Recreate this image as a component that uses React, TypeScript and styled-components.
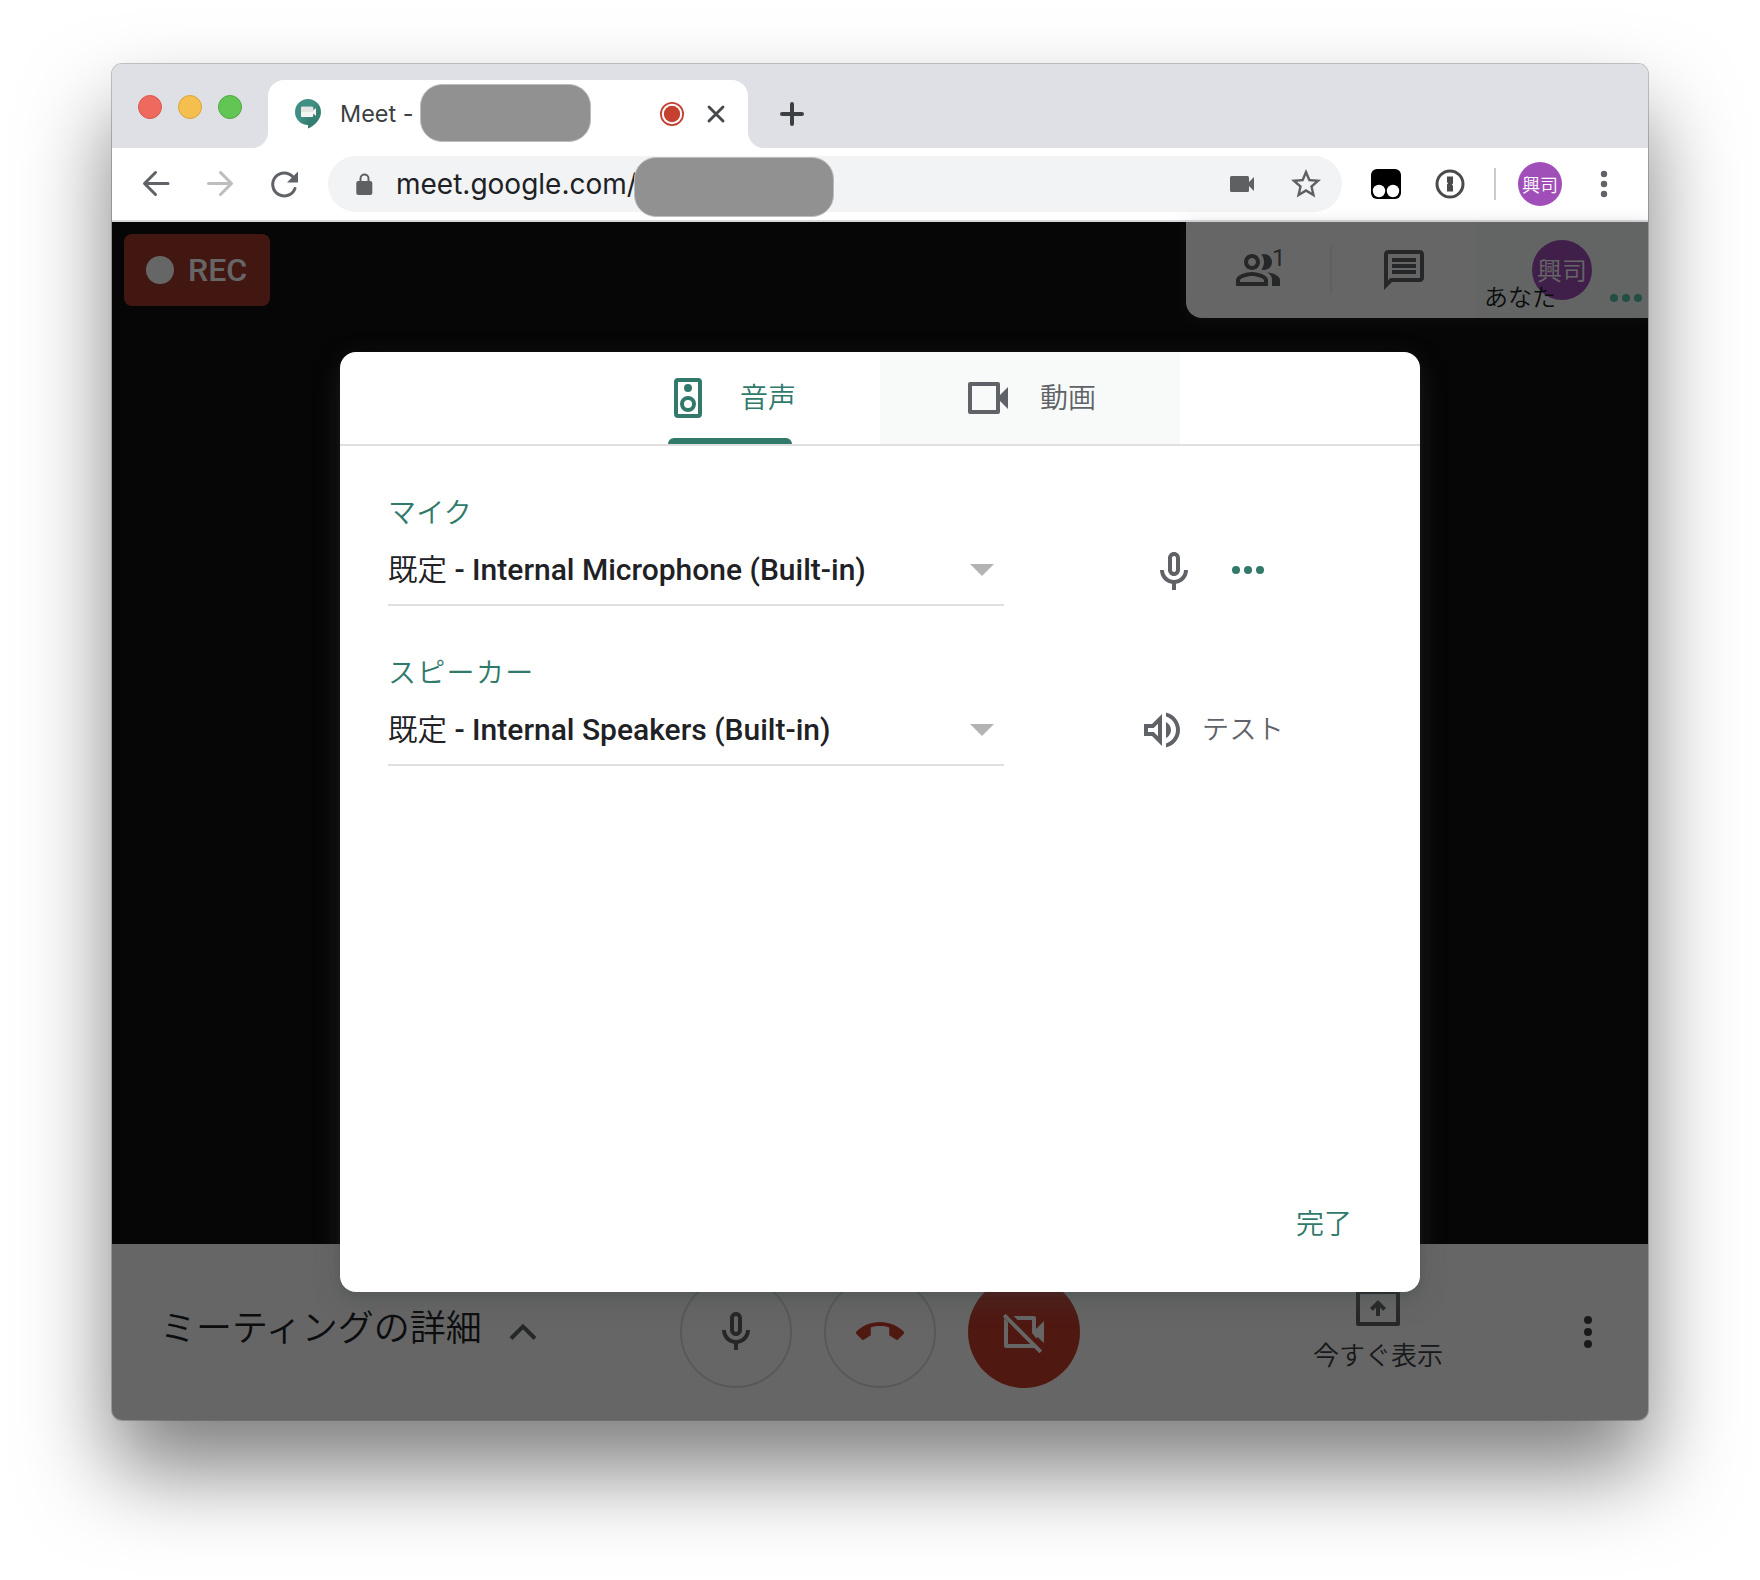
import React from "react";
import styled, { createGlobalStyle } from "styled-components";

const GlobalStyle = createGlobalStyle`
  *, *::before, *::after { box-sizing: border-box; }
  body { margin: 0; background: #fff; }
`;

const jp = `Roboto, "Noto Sans CJK JP", sans-serif`;
const ui = `Inter, "Noto Sans CJK JP", sans-serif`;

const Desktop = styled.div`
  width: 1760px;
  height: 1580px;
  padding: 64px 112px;
  background: #fff;
  overflow: hidden;
  font-family: ${jp};
`;

const Window = styled.div`
  width: 1536px;
  height: 1356px;
  display: flex;
  flex-direction: column;
  border-radius: 10px;
  overflow: hidden;
  box-shadow: 0 0 0 1px rgba(0, 0, 0, 0.22), 0 50px 88px rgba(0, 0, 0, 0.51);
`;

const TabStrip = styled.div`
  height: 84px;
  flex: none;
  display: flex;
  align-items: flex-end;
  background: #dfe0e6;
`;

const Lights = styled.div`
  width: 156px;
  height: 84px;
  display: flex;
  gap: 16px;
  padding: 31px 0 0 26px;
`;

const Light = styled.span<{ $fill: string; $edge: string }>`
  width: 24px;
  height: 24px;
  border-radius: 50%;
  background: ${(p) => p.$fill};
  border: 1px solid ${(p) => p.$edge};
`;

const Tab = styled.div`
  position: relative;
  width: 480px;
  height: 68px;
  display: flex;
  align-items: center;
  padding-left: 26px;
  background: #fff;
  border-radius: 16px 16px 0 0;
  &::before,
  &::after {
    content: "";
    position: absolute;
    bottom: 0;
    width: 16px;
    height: 16px;
  }
  &::before {
    left: -16px;
    background: radial-gradient(circle at 0 0, transparent 15.5px, #fff 16.5px);
  }
  &::after {
    right: -16px;
    background: radial-gradient(circle at 100% 0, transparent 15.5px, #fff 16.5px);
  }
`;

const TabTitle = styled.span`
  width: 80px;
  margin-left: 18px;
  font: 400 23.4px/28px ${ui};
  color: #3c4043;
  white-space: nowrap;
`;

const Redaction = styled.span<{ $w: number; $h: number; $shift?: number }>`
  flex: none;
  width: ${(p) => p.$w}px;
  height: ${(p) => p.$h}px;
  margin-top: ${(p) => p.$shift ?? 0}px;
  border-radius: 22px;
  background: #919191;
  border: 1px solid #bdbdbd;
`;

const TabIcons = styled.div`
  display: flex;
  align-items: center;
  gap: 12px;
  margin-left: 69px;
`;

const NewTab = styled.div`
  height: 68px;
  display: flex;
  align-items: center;
  margin-left: 32px;
`;

const Toolbar = styled.div`
  height: 74px;
  flex: none;
  display: flex;
  align-items: center;
  background: #fff;
  border-bottom: 2px solid #d8d9dc;
`;

const NavButtons = styled.div`
  width: 216px;
  display: flex;
  gap: 32px;
  padding-left: 28px;
`;

const Omnibox = styled.div`
  width: 1014px;
  height: 56px;
  display: flex;
  align-items: center;
  padding-left: 28px;
  border-radius: 28px;
  background: #f1f3f4;
`;

const Url = styled.span`
  width: 238px;
  margin-left: 23px;
  font: 400 28px/40px ${ui};
  color: #202124;
  white-space: nowrap;
`;

const OmniIcons = styled.div`
  display: flex;
  align-items: center;
  gap: 34px;
  margin: 0 18px 0 auto;
`;

const Extensions = styled.div`
  display: flex;
  align-items: center;
  padding-left: 29px;
`;

const OnePassword = styled.svg`
  margin-left: 34px;
`;

const Separator = styled.span`
  width: 2px;
  height: 32px;
  margin: 0 22px 0 29px;
  background: #ccc;
`;

const Avatar = styled.span<{ $size: number; $font: number }>`
  flex: none;
  width: ${(p) => p.$size}px;
  height: ${(p) => p.$size}px;
  display: flex;
  align-items: center;
  justify-content: center;
  padding-bottom: 1px;
  border-radius: 50%;
  background: #a04eb8;
  color: #fff;
  font: 350 ${(p) => p.$font}px/1 "Noto Sans CJK JP", sans-serif;
  white-space: nowrap;
`;

const MenuDots = styled.div`
  margin-left: 36px;
  display: flex;
`;

const Page = styled.div`
  position: relative;
  flex: 1;
  display: flex;
  flex-direction: column;
  background: #101010;
`;

const Stage = styled.div`
  flex: 1;
  display: flex;
  justify-content: space-between;
  align-items: flex-start;
  padding-left: 12px;
`;

const RecBadge = styled.div`
  width: 146px;
  height: 72px;
  margin-top: 12px;
  display: flex;
  align-items: center;
  gap: 14px;
  padding-left: 22px;
  border-radius: 8px;
  background: #a5392b;
  color: #fff;
  font: 500 32px/74px Roboto, sans-serif;
  &::before {
    content: "";
    width: 28px;
    height: 28px;
    border-radius: 50%;
    background: #fff;
  }
`;

const InfoPanel = styled.div`
  width: 462px;
  height: 96px;
  display: flex;
  align-items: center;
  background: #fff;
  border-radius: 0 0 0 16px;
  overflow: hidden;
  box-shadow: 0 2px 16px rgba(90, 95, 92, 0.25);
`;

const PanelButton = styled.div<{ $w: number; $divider?: boolean }>`
  width: ${(p) => p.$w}px;
  height: 48px;
  display: flex;
  justify-content: center;
  border-right: ${(p) => (p.$divider ? "2px solid #efefef" : "0")};
`;

const IconWithCount = styled.div`
  position: relative;
  width: 48px;
  height: 48px;
`;

const Count = styled.span`
  position: absolute;
  left: 38px;
  top: -2px;
  font: 400 24px/28px Roboto, sans-serif;
  color: #5f6368;
`;

const SelfTile = styled.div`
  position: relative;
  width: 172px;
  height: 96px;
  padding: 18px 0 0 56px;
  background: #f7fdf9;
`;

const SelfName = styled.span`
  position: absolute;
  left: 8px;
  top: 58px;
  font: 350 24px/36px ${jp};
  color: #202124;
`;

const Dots = styled.span<{ $vertical?: boolean; $color: string }>`
  display: flex;
  flex-direction: ${(p) => (p.$vertical ? "column" : "row")};
  gap: 4px;
  i {
    width: 8px;
    height: 8px;
    border-radius: 50%;
    background: ${(p) => p.$color};
  }
`;

const TileDots = styled.div`
  position: absolute;
  left: 134px;
  top: 72px;
`;

const BottomBar = styled.div`
  height: 176px;
  flex: none;
  display: grid;
  grid-template-columns: 568px 400px 1fr;
  align-items: center;
  background: #fff;
`;

const Details = styled.div`
  display: flex;
  align-items: center;
  padding-left: 48px;
  gap: 24px;
  font: 350 36px/48px ${jp};
  color: #202124;
  white-space: nowrap;
`;

const DetailsText = styled.span`
  margin-top: -6px;
  width: 325px;
`;

const CallButtons = styled.div`
  display: flex;
  gap: 32px;
`;

const CallButton = styled.div<{ $off?: boolean }>`
  width: 112px;
  height: 112px;
  display: flex;
  align-items: center;
  justify-content: center;
  border-radius: 50%;
  border: ${(p) => (p.$off ? "0" : "2px solid #dadce0")};
  background: ${(p) => (p.$off ? "#c5402f" : "#fff")};
`;

const RightTools = styled.div`
  display: flex;
  align-items: center;
  padding-left: 148px;
`;

const Present = styled.div`
  width: 300px;
  display: flex;
  flex-direction: column;
  align-items: center;
  gap: 6px;
  margin: 0 56px 6px 0;
  font: 350 26px/36px ${jp};
  color: #3c4043;
`;

const Scrim = styled.div`
  position: absolute;
  inset: 0;
  display: flex;
  align-items: flex-start;
  justify-content: center;
  padding-top: 130px;
  background: rgba(0, 0, 0, 0.6);
`;

const Dialog = styled.div`
  width: 1080px;
  height: 940px;
  display: flex;
  flex-direction: column;
  background: #fff;
  border-radius: 16px;
  overflow: hidden;
  box-shadow: 0 2px 6px rgba(60, 68, 64, 0.15), 0 8px 28px rgba(60, 68, 64, 0.32);
`;

const DialogTabs = styled.div`
  height: 94px;
  flex: none;
  display: flex;
  justify-content: center;
  border-bottom: 2px solid #e0e0e0;
`;

const DialogTab = styled.div<{ $active?: boolean }>`
  position: relative;
  width: 300px;
  height: 92px;
  display: flex;
  gap: 28px;
  padding: 22px 0 0 84px;
  background: ${(p) => (p.$active ? "#fff" : "#f8faf9")};
  color: ${(p) => (p.$active ? "#31796b" : "#5f6368")};
  font: 350 28px/50px ${jp};
  &::after {
    content: "";
    display: ${(p) => (p.$active ? "block" : "none")};
    position: absolute;
    left: 88px;
    bottom: 0;
    width: 124px;
    height: 6px;
    border-radius: 6px 6px 0 0;
    background: #31796b;
  }
`;

const Settings = styled.div`
  flex: 1;
  display: flex;
  flex-direction: column;
  gap: 24px;
  padding: 44px 48px 0;
`;

const Row = styled.div`
  height: 136px;
  display: flex;
`;

const Field = styled.div`
  width: 616px;
  height: 116px;
`;

const Label = styled.div<{ $tracking: number }>`
  height: 44px;
  font: 350 28px/48px ${jp};
  letter-spacing: ${(p) => p.$tracking}px;
  color: #31796b;
`;

const Select = styled.div`
  height: 72px;
  display: flex;
  align-items: center;
  justify-content: space-between;
  padding: 2px 10px 0 0;
  border-bottom: 2px solid #e0e0e0;
  font: 500 30px/68px Roboto, "Noto Sans CJK JP", sans-serif;
  color: #202124;
  white-space: nowrap;
  small {
    font-size: 29.5px;
    font-weight: 350;
  }
`;

const Caret = styled.span`
  border: 12px solid transparent;
  border-top-color: #b3b3b3;
  border-bottom: 0;
`;

const RowTools = styled.div<{ $left: number; $gap: number }>`
  height: 48px;
  display: flex;
  align-items: center;
  gap: ${(p) => p.$gap}px;
  margin: 56px 0 0 ${(p) => p.$left}px;
  color: #5f6368;
  font: 350 27px/50px ${jp};
  letter-spacing: 0.4px;
`;

const MicSlot = styled.span`
  display: flex;
  margin-top: 4px;
`;

const Done = styled.div`
  display: flex;
  justify-content: flex-end;
  padding: 0 68px 46px 0;
  font: 350 28px/42px ${jp};
  color: #31796b;
`;

const MIC =
  "M12 14c1.66 0 3-1.34 3-3V5c0-1.66-1.34-3-3-3S9 3.34 9 5v6c0 1.66 1.34 3 3 3zm-1-9c0-.55.45-1 1-1s1 .45 1 1v6c0 .55-.45 1-1 1s-1-.45-1-1V5zm6 6c0 2.76-2.24 5-5 5s-5-2.24-5-5H5c0 3.53 2.61 6.43 6 6.92V21h2v-3.08c3.39-.49 6-3.39 6-6.92h-2z";
const VOLUME =
  "M3 9v6h4l5 5V4L7 9H3zm7-.17v6.34L7.83 13H5v-2h2.83L10 8.83zM16.5 12c0-1.77-1.02-3.29-2.5-4.03v8.05c1.48-.73 2.5-2.25 2.5-4.02zM14 3.23v2.06c2.89.86 5 3.54 5 6.71s-2.11 5.85-5 6.71v2.06c4.01-.91 7-4.49 7-8.77s-2.99-7.86-7-8.77z";
const PEOPLE =
  "M16.67 13.13C18.04 14.06 19 15.32 19 17v3h4v-3c0-2.18-3.57-3.47-6.33-3.87zM15 12c2.21 0 4-1.79 4-4s-1.79-4-4-4c-.47 0-.91.1-1.33.24C14.5 5.27 15 6.58 15 8s-.5 2.73-1.33 3.76c.42.14.86.24 1.33.24zM9 12c2.21 0 4-1.79 4-4s-1.79-4-4-4-4 1.79-4 4 1.79 4 4 4zm0-6c1.1 0 2 .9 2 2s-.9 2-2 2-2-.9-2-2 .9-2 2-2zM9 13c-2.67 0-8 1.34-8 4v3h16v-3c0-2.66-5.33-4-8-4zm6 5H3v-.99C3.2 16.29 6.3 15 9 15s5.8 1.29 6 2v1z";
const CHAT =
  "M4 4h16v12H5.17L4 17.17V4m0-2c-1.1 0-1.99.9-1.99 2L2 22l4-4h14c1.1 0 2-.9 2-2V4c0-1.1-.9-2-2-2H4zm2 10h12v2H6v-2zm0-3h12v2H6V9zm0-3h12v2H6V6z";
const SPEAKER =
  "M17 2H7a2 2 0 0 0-2 2v16a2 2 0 0 0 2 1.99L17 22a2 2 0 0 0 2-2V4a2 2 0 0 0-2-2zm0 18H7V4h10v16zm-5-11a2 2 0 1 0 0-4 2 2 0 0 0 0 4zm0 10a4 4 0 1 0 0-8 4 4 0 0 0 0 8zm0-6a2 2 0 1 1 0 4 2 2 0 0 1 0-4z";
const VIDEO =
  "M18 10.5V5a1 1 0 0 0-1-1H3a1 1 0 0 0-1 1v14a1 1 0 0 0 1 1h14a1 1 0 0 0 1-1v-5.5l4 4v-11l-4 4zM16 18H4V6h12v12z";
const HANGUP =
  "M12 9c-1.6 0-3.15.25-4.6.72v3.9L4.1 15.8c-.3.25-.8.2-1.1-.1L.29 13.08c-.38-.38-.38-1.03 0-1.41C3.34 8.78 7.46 7 12 7s8.66 1.78 11.71 4.67c.38.38.38 1.03 0 1.41L21 15.7c-.3.3-.8.35-1.1.1l-3.3-2.18v-3.9C15.15 9.25 13.6 9 12 9z";
const PRESENT =
  "M22 3H2a1 1 0 0 0-1 1v16a1 1 0 0 0 1 1h20a1 1 0 0 0 1-1V4a1 1 0 0 0-1-1zm-1 16H3V5h18v14zM12 8l4 4-1.4 1.4L13 11.8V16h-2v-4.2l-1.6 1.6L8 12z";
const STAR =
  "M22 9.24l-7.19-.62L12 2 9.19 8.63 2 9.24l5.46 4.73L5.82 21 12 17.27 18.18 21l-1.63-7.03L22 9.24zM12 15.4l-3.76 2.27 1-4.28-3.32-2.88 4.38-.38L12 6.1l1.71 4.04 4.38.38-3.32 2.88 1 4.28L12 15.4z";

const Icon = ({ d, color = "#5f6368", size = 48 }: { d: string; color?: string; size?: number }) => (
  <svg width={size} height={size} viewBox="0 0 24 24" fill={color} fillRule="evenodd">
    <path d={d} />
  </svg>
);

const DotRow = ({ color, vertical }: { color: string; vertical?: boolean }) => (
  <Dots $color={color} $vertical={vertical}>
    <i />
    <i />
    <i />
  </Dots>
);

const MeetLogo = () => (
  <svg width="28" height="32" viewBox="0 0 28 32">
    <defs>
      <linearGradient id="bubble" x1="0" y1="0" x2="1" y2="1">
        <stop offset="0.45" stopColor="#408f83" />
        <stop offset="0.65" stopColor="#357f72" />
      </linearGradient>
    </defs>
    <path d="M14 1a13 13 0 1 0 0 26v3.600c6-2.800 13-8.600 13-16.600A13 13 0 0 0 14 1z" fill="url(#bubble)" />
    <path d="M8 8.700h10a1.200 1.200 0 0 1 1.200 1.200v2.600L22 10v8l-2.800-2.400v2.200a1.200 1.200 0 0 1-1.200 1.200H8a1 1 0 0 1-1-1V9.700a1 1 0 0 1 1-1z" fill="#f4f4f4" />
    <path d="M8 8.700h10a1.200 1.200 0 0 1 1.200 1.200V14H7V9.700a1 1 0 0 1 1-1z" fill="#e3e5e4" />
  </svg>
);

export default function App() {
  return (
    <>
      <GlobalStyle />
      <Desktop>
        <Window>
          <TabStrip>
            <Lights>
              <Light $fill="#ee6a5f" $edge="#d9574c" />
              <Light $fill="#f5bf4f" $edge="#dba23c" />
              <Light $fill="#62c655" $edge="#50a73e" />
            </Lights>
            <Tab>
              <MeetLogo />
              <TabTitle>Meet -</TabTitle>
              <Redaction $w={171} $h={58} $shift={-3} />
              <TabIcons>
                <svg width="24" height="24" viewBox="0 0 24 24">
                  <circle cx="12" cy="12" r="11.100" fill="none" stroke="#c5402f" strokeWidth="1.800" />
                  <circle cx="12" cy="12" r="8.200" fill="#c5402f" />
                </svg>
                <svg width="40" height="24" viewBox="0 0 40 24" stroke="#45494c" strokeWidth="2.900" strokeLinecap="round">
                  <path d="M13 5l14 14M27 5L13 19" />
                </svg>
              </TabIcons>
            </Tab>
            <NewTab>
              <svg width="24" height="24" viewBox="0 0 24 24" stroke="#3c4043" strokeWidth="4" strokeLinecap="round">
                <path d="M12 2v20M2 12h20" />
              </svg>
            </NewTab>
          </TabStrip>

          <Toolbar>
            <NavButtons>
              <svg width="32" height="32" viewBox="0 0 32 32" fill="none" stroke="#5f6368" strokeWidth="3" strokeLinecap="round" strokeLinejoin="round">
                <path d="M28 15.500H5M15.500 4.500l-11 11 11 11" />
              </svg>
              <svg width="32" height="32" viewBox="0 0 32 32" fill="none" stroke="#bcbdbf" strokeWidth="3" strokeLinecap="round" strokeLinejoin="round">
                <path d="M4.500 15.500H27.500M16.500 4.500l11 11-11 11" />
              </svg>
              <svg width="32" height="32" viewBox="0 0 32 32" fill="none" stroke="#5f6368" strokeWidth="3" strokeLinecap="round">
                <path d="M27 20.500a11.500 11.500 0 1 1-2-11.500" />
                <path d="M30 3.500v11H19z" fill="#5f6368" stroke="none" />
              </svg>
            </NavButtons>
            <Omnibox>
              <svg width="17" height="24" viewBox="0 0 17 24">
                <path d="M4.500 10V6.500a4 4 0 0 1 8 0V10" fill="none" stroke="#5f6062" strokeWidth="2" />
                <rect x="0.300" y="9" width="16" height="14" rx="2" fill="#5f6062" />
              </svg>
              <Url>meet.google.com/</Url>
              <Redaction $w={200} $h={60} $shift={6} />
              <OmniIcons>
                <svg width="24" height="16" viewBox="0 0 24 16" fill="#5f6062">
                  <path d="M1.500 0h16A1.500 1.500 0 0 1 19 1.500V6l5-5v14l-5-5v4.500a1.500 1.500 0 0 1-1.500 1.500h-16A1.500 1.500 0 0 1 0 14.500v-13A1.500 1.500 0 0 1 1.500 0z" />
                </svg>
                <Icon size={36} color="#5f6062" d={STAR} />
              </OmniIcons>
            </Omnibox>
            <Extensions>
              <svg width="30" height="30" viewBox="0 0 30 30">
                <rect width="30" height="30" rx="6" />
                <circle cx="8" cy="22" r="6.200" fill="#fff" />
                <circle cx="22" cy="22" r="6.200" fill="#fff" />
              </svg>
              <OnePassword width="30" height="30" viewBox="0 0 30 30">
                <circle cx="15" cy="15" r="13" fill="none" stroke="#4a4a4a" strokeWidth="3" />
                <path d="M12 7.500h6v7l-1 1 1 1.500v5.500h-6v-7l1-1-1-1.500z" fill="#4a4a4a" />
              </OnePassword>
              <Separator />
              <Avatar $size={44} $font={18}>興司</Avatar>
              <MenuDots>
                <svg width="12" height="28" viewBox="0 0 12 28" fill="#5f6368">
                  <circle cx="6" cy="4" r="3.200" />
                  <circle cx="6" cy="14" r="3.200" />
                  <circle cx="6" cy="24" r="3.200" />
                </svg>
              </MenuDots>
            </Extensions>
          </Toolbar>

          <Page>
            <Stage>
              <RecBadge>REC</RecBadge>
              <InfoPanel>
                <PanelButton $w={146} $divider>
                  <IconWithCount>
                    <Icon d={PEOPLE} />
                    <Count>1</Count>
                  </IconWithCount>
                </PanelButton>
                <PanelButton $w={144}>
                  <Icon d={CHAT} />
                </PanelButton>
                <SelfTile>
                  <Avatar $size={60} $font={25}>興司</Avatar>
                  <SelfName>あなた</SelfName>
                  <TileDots>
                    <DotRow color="#5ac4a8" />
                  </TileDots>
                </SelfTile>
              </InfoPanel>
            </Stage>
            <BottomBar>
              <Details>
                <DetailsText>ミーティングの詳細</DetailsText>
                <svg width="28" height="20" viewBox="0 0 28 20" fill="none" stroke="#5f6368" strokeWidth="4">
                  <path d="M2 16.500L14 4.500l12 12" />
                </svg>
              </Details>
              <CallButtons>
                <CallButton>
                  <Icon d={MIC} />
                </CallButton>
                <CallButton>
                  <Icon d={HANGUP} color="#c5402f" />
                </CallButton>
                <CallButton $off>
                  <svg width="48" height="48" viewBox="0 0 24 24" fill="#fff">
                    <path d="M6.800 4H17a1 1 0 0 1 1 1v5.500l4-4v11l-3.300-3-.5.700L16 12.500V6H8.800z" />
                    <path d="M2 5v14a1 1 0 0 0 1 1h14.500l-1-2H4V7z" />
                    <path d="M2.100 3.600L20.400 21.900" stroke="#fff" strokeWidth="1.900" />
                  </svg>
                </CallButton>
              </CallButtons>
              <RightTools>
                <Present>
                  <Icon d={PRESENT} />
                  今すぐ表示
                </Present>
                <DotRow color="#3c4043" vertical />
              </RightTools>
            </BottomBar>

            <Scrim>
              <Dialog>
                <DialogTabs>
                  <DialogTab $active>
                    <Icon d={SPEAKER} color="#31796b" />
                    音声
                  </DialogTab>
                  <DialogTab>
                    <Icon d={VIDEO} />
                    動画
                  </DialogTab>
                </DialogTabs>
                <Settings>
                  <Row>
                    <Field>
                      <Label $tracking={0.2}>マイク</Label>
                      <Select>
                        <span>
                          <small>既定</small> - Internal Microphone (Built-in)
                        </span>
                        <Caret />
                      </Select>
                    </Field>
                    <RowTools $left={146} $gap={34}>
                      <MicSlot>
                        <Icon d={MIC} />
                      </MicSlot>
                      <DotRow color="#31796b" />
                    </RowTools>
                  </Row>
                  <Row>
                    <Field>
                      <Label $tracking={1.3}>スピーカー</Label>
                      <Select>
                        <span>
                          <small>既定</small> - Internal Speakers (Built-in)
                        </span>
                        <Caret />
                      </Select>
                    </Field>
                    <RowTools $left={134} $gap={16}>
                      <Icon d={VOLUME} />
                      テスト
                    </RowTools>
                  </Row>
                </Settings>
                <Done>完了</Done>
              </Dialog>
            </Scrim>
          </Page>
        </Window>
      </Desktop>
    </>
  );
}
